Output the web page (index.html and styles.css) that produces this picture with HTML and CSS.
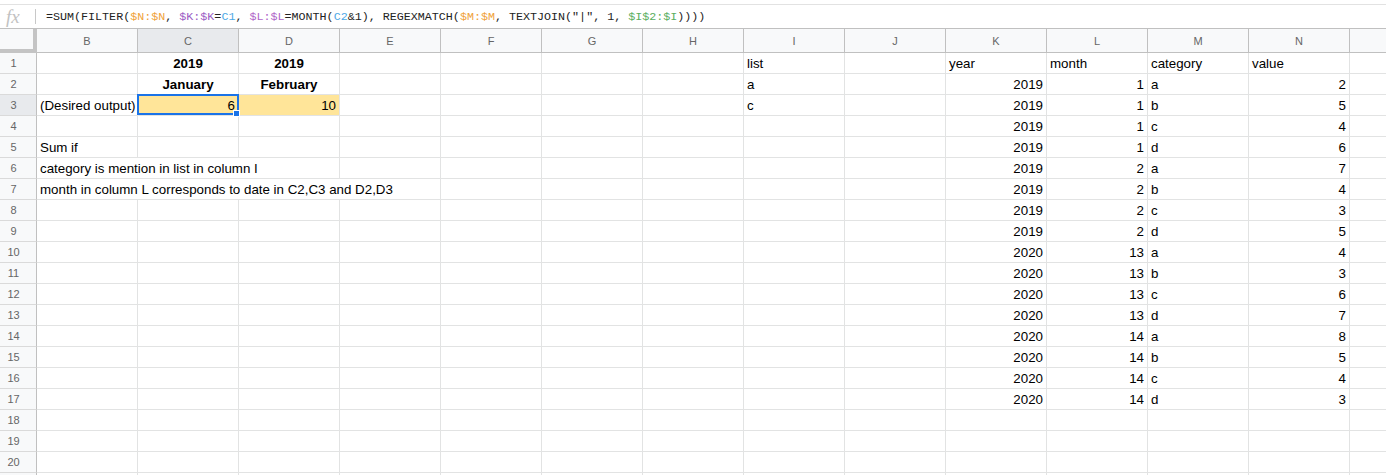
FILE: index.html
```html
<!DOCTYPE html>
<html>
	<head>
		<title>Sum if - Sheet</title>
		<link rel="stylesheet" href="styles.css">
	</head>
	<body>
		<div class="formula-bar">
			<span class="fx">fx</span>
			<span class="sep"></span>
			<span class="formula">=SUM(FILTER(<span class="ref-orange">$N:$N</span>, <span class="ref-purple">$K:$K</span>=<span class="ref-blue">C1</span>, <span class="ref-violet">$L:$L</span>=MONTH(<span class="ref-blue">C2</span>&amp;1), REGEXMATCH(<span class="ref-orange">$M:$M</span>, TEXTJOIN("|", 1, <span class="ref-green">$I$2:$I</span>))))</span>
		</div>
		<div class="sheet" id="sheet"></div>

		<script>
			let cols = ["B", "C", "D", "E", "F", "G", "H", "I", "J", "K", "L", "M", "N", ""];

			// cell text, classes, column span
			let cells = {
				"C1": ["2019", "bold center"],
				"D1": ["2019", "bold center"],
				"C2": ["January", "bold center"],
				"D2": ["February", "bold center"],
				"B3": ["(Desired output)", ""],
				"C3": ["6", "num fill selected"],
				"D3": ["10", "num fill"],
				"B5": ["Sum if", ""],
				"B6": ["category is mention in list in column I", "", 3],
				"B7": ["month in column L corresponds to date in C2,C3 and D2,D3", "", 4],
				"I1": ["list", ""],
				"I2": ["a", ""],
				"I3": ["c", ""],
				"K1": ["year", ""],
				"L1": ["month", ""],
				"M1": ["category", ""],
				"N1": ["value", ""]
			};

			let data = [
				[2019, 1, "a", 2], [2019, 1, "b", 5], [2019, 1, "c", 4], [2019, 1, "d", 6],
				[2019, 2, "a", 7], [2019, 2, "b", 4], [2019, 2, "c", 3], [2019, 2, "d", 5],
				[2020, 13, "a", 4], [2020, 13, "b", 3], [2020, 13, "c", 6], [2020, 13, "d", 7],
				[2020, 14, "a", 8], [2020, 14, "b", 5], [2020, 14, "c", 4], [2020, 14, "d", 3]
			];

			for (let i = 0; i < data.length; i++) {
				let row = i + 2;
				cells["K" + row] = [data[i][0], "num"];
				cells["L" + row] = [data[i][1], "num"];
				cells["M" + row] = [data[i][2], ""];
				cells["N" + row] = [data[i][3], "num"];
			}

			let html = '<div class="corner"></div>';
			for (let col of cols) {
				html += '<div class="col-head' + (col === "C" ? ' active' : '') + '">' + col + '</div>';
			}

			// row 21 only peeks in at the bottom edge, so no number for it
			for (let row = 1; row <= 21; row++) {
				let label = row <= 20 ? row : "";
				html += '<div class="row-head' + (row === 3 ? ' active' : '') + '">' + label + '</div>';
				for (let c = 0; c < cols.length; c++) {
					let cell = cells[cols[c] + row];
					if (!cell) {
						html += '<div class="cell"></div>';
						continue;
					}
					let span = cell[2] || 1;
					let style = span > 1 ? ' style="grid-column: span ' + span + '"' : '';
					html += '<div class="cell ' + cell[1] + '"' + style + '>' + cell[0] + '</div>';
					c += span - 1;
				}
			}

			document.getElementById("sheet").innerHTML = html;
		</script>
	</body>
</html>
```

FILE: styles.css
```css
body {
	margin: 0;
	padding-top: 4px;
	overflow: hidden;
	background: #fff;
	font-family: "Liberation Sans", Arial, sans-serif;
}

.formula-bar {
	display: flex;
	align-items: center;
	height: 23px;
	border-top: 1px solid #e2e2e2;
	border-bottom: 1px solid #c0c0c0;
}

.fx {
	width: 35px;
	padding-left: 6px;
	box-sizing: border-box;
	font-family: "Liberation Serif", serif;
	font-style: italic;
	font-size: 19px;
	color: #c2c2c2;
}

.sep {
	width: 1px;
	height: 15px;
	margin-right: 10px;
	background: #c8c8c8;
}

.formula {
	font-family: "Liberation Mono", monospace;
	font-size: 11.7px;
	color: #222;
	white-space: pre;
}

.ref-orange { color: #f0a23a; }
.ref-purple { color: #9b5cc4; }
.ref-violet { color: #b064c8; }
.ref-blue { color: #4fa9e6; }
.ref-green { color: #5aae5e; }

.sheet {
	display: grid;
	grid-template-columns: 37px repeat(14, 101px);
	grid-template-rows: 24px;
	grid-auto-rows: 21px;
}

.corner {
	box-sizing: border-box;
	background: #f8f9fa;
	border-right: 4px solid #c4c4c4;
	border-bottom: 4px solid #c4c4c4;
}

.col-head,
.row-head {
	box-sizing: border-box;
	display: flex;
	align-items: center;
	justify-content: center;
	background: #f8f9fa;
	color: #666;
	font-size: 11px;
	border-right: 1px solid #c0c0c0;
	border-bottom: 1px solid #c0c0c0;
}

.row-head {
	padding-right: 9px;
	border-bottom-color: #dadada;
}

.col-head.active,
.row-head.active {
	background: #e8eaed;
}

.cell {
	box-sizing: border-box;
	display: flex;
	align-items: flex-end;
	padding: 0 3px 1px;
	border-right: 1px solid #e2e3e3;
	border-bottom: 1px solid #e2e3e3;
	font-size: 13.33px;
	line-height: 17px;
	color: #000;
	white-space: nowrap;
	overflow: hidden;
}

.bold {
	font-weight: bold;
}

.center {
	justify-content: center;
}

.num {
	justify-content: flex-end;
}

.fill {
	background: #ffe599;
}

.selected {
	position: relative;
	overflow: visible;
}

.selected::before {
	content: "";
	position: absolute;
	top: -1px;
	left: -1px;
	right: -1px;
	bottom: 0;
	border: 2px solid #1a73e8;
}

.selected::after {
	content: "";
	position: absolute;
	right: -2px;
	bottom: -2px;
	width: 7px;
	height: 7px;
	box-sizing: border-box;
	border: 1px solid #fff;
	background: #1a73e8;
}
```
